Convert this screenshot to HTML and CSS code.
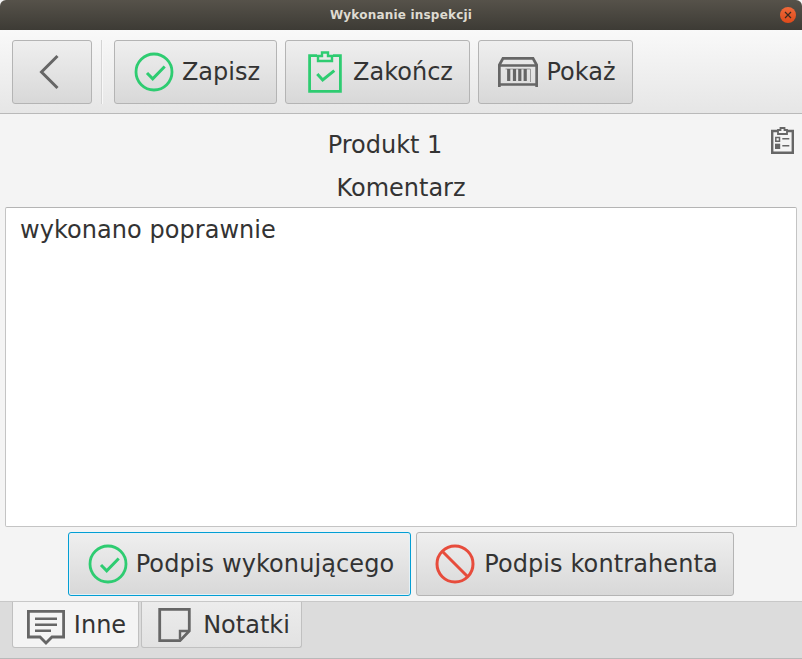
FILE: index.html
```html
<!DOCTYPE html>
<html>
<head>
  <meta charset="utf-8">
  <title>Wykonanie inspekcji</title>
  <link rel="stylesheet" href="styles.css">
</head>
<body>
  <div class="window">
    <div class="titlebar">
      <span class="title">Wykonanie inspekcji</span>
      <span class="close">
        <svg width="8" height="8" viewBox="0 0 8 8"><path d="M1 1L7 7M7 1L1 7" stroke="#3a2a20" stroke-width="1.2" fill="none"/></svg>
      </span>
    </div>

    <div class="toolbar">
      <button class="btn back">
        <svg width="24" height="38" viewBox="0 0 24 38"><path d="M19.500 3L3.500 19L19.500 35" stroke="#666" stroke-width="3" fill="none"/></svg>
      </button>
      <div class="separator"></div>
      <button class="btn tool zapisz">
        <svg width="40" height="40" viewBox="0 0 40 40"><circle cx="20" cy="20" r="18" stroke="#2ecc71" stroke-width="2.8" fill="none"/><path d="M13 21L18.700 26.800L30.700 14.500" stroke="#2ecc71" stroke-width="3" fill="none"/></svg>
        Zapisz
      </button>
      <button class="btn tool zakoncz">
        <svg width="34" height="42" viewBox="0 0 34 42"><path d="M9 4.600H1.600V40.400H32.400V4.600H25" stroke="#2ecc71" stroke-width="2.8" fill="none"/><path d="M10 10V5H14V1.500H20V5H24V10Z" stroke="#2ecc71" stroke-width="2.400" fill="none"/><path d="M9.300 23L14.700 29L26.300 19.700" stroke="#2ecc71" stroke-width="3" fill="none"/></svg>
        Zakończ
      </button>
      <button class="btn tool pokaz">
        <svg width="40" height="32" viewBox="0 0 40 32"><path d="M1.300 31V9L5 2.300H35L38.700 9V31" stroke="#666" stroke-width="2.800" fill="none"/><path d="M1.300 9.500H38.700M1.300 28.500H38.700" stroke="#666" stroke-width="2.600" fill="none"/><path d="M7.500 13H32.500V26" stroke="#999" stroke-width="1" fill="none"/><path d="M10.700 13V25M16.500 13V25M21.800 13V25M27.200 13V25" stroke="#666" stroke-width="3.200"/></svg>
        Pokaż
      </button>
    </div>

    <div class="content">
      <div class="product-row">
        <span class="product">Produkt 1</span>
        <svg class="list-icon" width="23" height="27" viewBox="0 0 23 27"><path d="M7 4H1.200V25.800H21.800V4H16" stroke="#666" stroke-width="2.400" fill="none"/><path d="M7 7V3H9.500V1H13.500V3H16V7Z" stroke="#666" stroke-width="1.800" fill="none"/><path d="M4.800 10.500H8.500V14.300H4.800Z" stroke="#666" stroke-width="1.500" fill="none"/><path d="M4 16.700H9.200V22H4Z" fill="#666"/><path d="M11.300 11.700H18.300M11.300 18.700H18.300" stroke="#666" stroke-width="1.600"/></svg>
      </div>
      <div class="label">Komentarz</div>
      <div class="textarea">wykonano poprawnie</div>
      <div class="signatures">
        <button class="btn sign focused">
          <svg width="40" height="40" viewBox="0 0 40 40"><circle cx="20" cy="20" r="18" stroke="#2ecc71" stroke-width="2.800" fill="none"/><path d="M13 21L18.700 26.800L30.700 14.500" stroke="#2ecc71" stroke-width="3" fill="none"/></svg>
          Podpis wykonującego
        </button>
        <button class="btn sign kontrahent">
          <svg width="40" height="40" viewBox="0 0 40 40"><circle cx="20" cy="20" r="18" stroke="#e74c3c" stroke-width="3" fill="none"/><path d="M7.500 7.500L32.500 32.500" stroke="#e74c3c" stroke-width="3" fill="none"/></svg>
          Podpis kontrahenta
        </button>
      </div>
    </div>

    <div class="tabs">
      <div class="tab active">
        <svg class="speech" width="40" height="36" viewBox="0 0 40 36"><path d="M1.400 1.400H36.600V27H25L19 33L13 27H1.400Z" stroke="#666" stroke-width="2.800" fill="none"/><path d="M8 8.700H30M8 14.700H30M8 20.700H24" stroke="#666" stroke-width="2.600"/></svg>
        Inne
      </div>
      <div class="tab notatki">
        <svg width="34" height="34" viewBox="0 0 34 34"><path d="M2.700 1.400H32.300V23L23 32.600H2.700Z" stroke="#666" stroke-width="2.800" fill="none"/><path d="M31 23H23V31" stroke="#666" stroke-width="2.400" fill="none"/></svg>
        Notatki
      </div>
    </div>
  </div>
</body>
</html>
```

FILE: styles.css
```css
html, body {
  margin: 0;
  height: 100%;
}

body {
  font-family: "DejaVu Sans", sans-serif;
  color: #333;
  background-color: #f4f4f4;
}

.window {
  display: flex;
  flex-direction: column;
  height: 659px;
  overflow: hidden;
}

/* pasek tytulu */
.titlebar {
  display: flex;
  align-items: center;
  justify-content: center;
  position: relative;
  height: 30px;
  flex: none;
  box-sizing: border-box;
  border-radius: 6px 6px 0 0;
  background: linear-gradient(#56524a, #3d3b35);
}

.title {
  color: #dfdbd2;
  font-size: 12px;
  font-weight: bold;
  letter-spacing: 0.2px;
}

.close {
  position: absolute;
  right: 6px;
  top: 7px;
  width: 16px;
  height: 16px;
  border-radius: 50%;
  display: flex;
  align-items: center;
  justify-content: center;
  background: linear-gradient(#f0693a, #de4a1a);
}

/* przyciski */
.btn {
  display: flex;
  align-items: center;
  justify-content: center;
  box-sizing: border-box;
  height: 64px;
  padding: 0;
  font-family: inherit;
  font-size: 24px;
  color: #333;
  border: 1px solid #b4b4b4;
  border-radius: 3px;
  background: linear-gradient(#efefef, #d8d8d8);
}

.toolbar {
  display: flex;
  align-items: center;
  flex: none;
  box-sizing: border-box;
  height: 84px;
  padding: 0 12px;
  border-bottom: 1px solid #b9b9b9;
  background: linear-gradient(#f9f9f9, #e6e6e6);
}

.back {
  width: 80px;
}

.back svg {
  margin-right: 4px;
}

.separator {
  width: 2px;
  height: 64px;
  margin: 0 11px 0 9px;
  background-color: #f8f8f8;
  border-left: 1px solid #d4d4d4;
  box-sizing: border-box;
}

.tool {
  gap: 8px;
  margin-right: 8px;
  padding-left: 3px;
}

.zapisz { width: 163px; }
.zakoncz { width: 185px; gap: 11px; padding-left: 6px; }
.pokaz { width: 155px; }

/* tresc */
.content {
  flex: 1;
  display: flex;
  flex-direction: column;
  min-height: 0;
}

.product-row {
  position: relative;
  height: 58px;
  padding-right: 32px;
  line-height: 62px;
  text-align: center;
  font-size: 24px;
  flex: none;
}

.list-icon {
  position: absolute;
  right: 8px;
  top: 13px;
}

.label {
  text-align: center;
  font-size: 24px;
  height: 35px;
  line-height: 33px;
  flex: none;
}

.textarea {
  flex: 1;
  margin: 0 5px;
  padding: 6px 14px;
  font-size: 24px;
  line-height: 32px;
  letter-spacing: 0.05px;
  border: 1px solid #c4c4c4;
  border-top-color: #b4b4b4;
  border-radius: 2px;
  background-color: #fff;
}

.signatures {
  display: flex;
  justify-content: center;
  gap: 5px;
  height: 64px;
  padding: 5px 0 5px;
  flex: none;
}

.sign {
  gap: 8px;
  padding-left: 3px;
  letter-spacing: 0.1px;
}

.focused {
  width: 343px;
  border-color: #039ed3;
  box-shadow: inset 0 0 0 1px #e4f1f7;
}

.kontrahent {
  width: 318px;
  gap: 9px;
}

/* zakladki */
.tabs {
  display: flex;
  flex: none;
  gap: 2px;
  box-sizing: border-box;
  height: 58px;
  padding-left: 12px;
  border-top: 1px solid #c8c8c8;
  border-bottom: 1px solid #b9b9b9;
  background-color: #dcdcdc;
}

.tab {
  display: flex;
  align-items: center;
  justify-content: center;
  box-sizing: border-box;
  height: 46px;
  font-size: 24px;
  border: 1px solid #c0c0c0;
  border-top: none;
  border-radius: 0 0 3px 3px;
  background: linear-gradient(#ececec, #e2e2e2);
}

.tab.active {
  width: 127px;
  gap: 7px;
  padding-left: 2px;
  background: #f4f4f4;
}

.speech {
  margin-top: 7px;
}

.tab.notatki {
  width: 161px;
  gap: 12px;
  padding-left: 4px;
}
```
